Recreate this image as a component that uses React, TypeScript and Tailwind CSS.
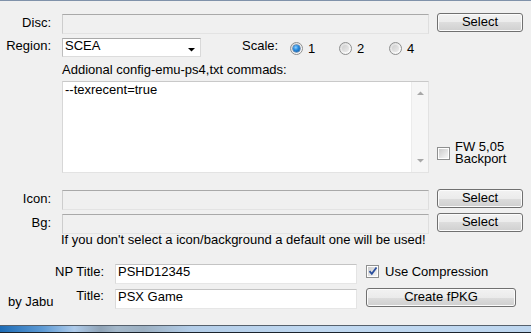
import React from "react";

const font = { fontFamily: '"Liberation Sans", Arial, sans-serif' };

function Btn({ children, className = "" }: { children: React.ReactNode; className?: string }) {
  return (
    <div
      className={
        "flex items-center justify-center rounded-[3px] border border-[#707070] bg-[linear-gradient(to_bottom,#f2f2f2_0%,#ebebeb_50%,#dddddd_50%,#cfcfcf_100%)] shadow-[inset_0_0_0_1px_#fbfbfb] text-[13px] leading-[14px] text-black " +
        className
      }
    >
      <span className="-mt-[1px]">{children}</span>
    </div>
  );
}

function DisabledField({ className = "" }: { className?: string }) {
  return (
    <div
      className={
        "h-[20px] w-[367px] border border-t-[#a9a9a9] border-l-[#cdcdcd] border-r-[#dedede] border-b-[#e3e3e3] bg-[#f0f0f0] " +
        className
      }
    />
  );
}

function WhiteField({ value, className = "" }: { value: string; className?: string }) {
  return (
    <div
      className={
        "h-[20px] w-[242px] border border-t-[#c4c4c4] border-l-[#dadada] border-r-[#e4e4e4] border-b-[#e6e6e6] bg-white pl-[2px] text-[13px] leading-[14px] text-black " +
        className
      }
    >
      {value}
    </div>
  );
}

function Radio({ checked }: { checked?: boolean }) {
  return (
    <div className="relative h-[13px] w-[13px] shrink-0 rounded-full border border-[#8e8f8f] bg-[linear-gradient(135deg,#d6d6d6_0%,#f4f4f4_60%,#ffffff_100%)]">
      {checked ? (
        <div className="absolute left-[2px] top-[2px] h-[7px] w-[7px] rounded-full bg-[radial-gradient(circle_at_40%_35%,#8fd0ff_0%,#2a8de0_40%,#0d4e93_100%)] shadow-[0_0_0_0.5px_#1c4f86]" />
      ) : (
        <div className="absolute left-[2px] top-[2px] h-[7px] w-[7px] rounded-full bg-[linear-gradient(135deg,#cfcfcf_0%,#ececec_100%)]" />
      )}
    </div>
  );
}

function Check({ checked }: { checked?: boolean }) {
  return (
    <div className="relative h-[13px] w-[13px] shrink-0 border border-[#8e8f8f] bg-white">
      <div className="absolute left-[1px] top-[1px] h-[9px] w-[9px] bg-[linear-gradient(135deg,#cbcbcb_0%,#e6e6e6_60%,#f6f6f6_100%)]" />
      {checked ? (
        <svg className="absolute left-[1px] top-[0px]" width="10" height="10" viewBox="0 0 10 10">
          <path d="M1.5 5.2 L3.8 7.8 L8.5 1.5" fill="none" stroke="#2a4f9e" strokeWidth="1.8" />
        </svg>
      ) : null}
    </div>
  );
}

export default function App() {
  return (
    <div className="flex h-[333px] w-[531px] flex-col overflow-hidden bg-[#f0f0f0] text-[13px] text-black" style={font}>
      <div className="h-[1px] shrink-0 bg-[#8092aa]" />

      {/* Disc */}
      <div className="mt-[12px] flex items-start">
        <div className="mt-[3px] w-[51px] text-right leading-[14px]">Disc:</div>
        <DisabledField className="ml-[11px] mt-[1px]" />
        <Btn className="ml-[8px] h-[19px] w-[86px]">Select</Btn>
      </div>

      {/* Region / Scale */}
      <div className="mt-[4px] flex items-start">
        <div className="mt-[1px] w-[51px] text-right leading-[14px]">Region:</div>
        <div className="ml-[11px] flex h-[19px] w-[139px] items-start border border-t-[#a9a9a9] border-l-[#bdbdbd] border-r-[#d9d9d9] border-b-[#dcdcdc] bg-white">
          <span className="flex-1 pl-[2px] leading-[14px]">SCEA</span>
          <svg className="mr-[5px] mt-[9px]" width="7" height="4" viewBox="0 0 7 4">
            <path d="M0 0 H7 L3.5 3.5 Z" fill="#000" />
          </svg>
        </div>
        <div className="ml-[41px] mt-[1px] w-[48px] leading-[14px]">Scale:</div>
        <div className="mt-[4px] flex w-[49px] items-center">
          <Radio checked />
          <span className="ml-[5px] leading-[13px]">1</span>
        </div>
        <div className="mt-[4px] flex w-[50px] items-center">
          <Radio />
          <span className="ml-[5px] leading-[13px]">2</span>
        </div>
        <div className="mt-[4px] flex items-center">
          <Radio />
          <span className="ml-[5px] leading-[13px]">4</span>
        </div>
      </div>

      {/* Config label */}
      <div className="mt-[6px] pl-[62px] leading-[14px]">Addional config-emu-ps4,txt commads:</div>

      {/* Textarea + FW */}
      <div className="mt-[4px] flex items-start">
        <div className="ml-[62px] flex h-[92px] w-[367px] border border-t-[#c9c9c9] border-l-[#d7d7d7] border-r-[#e2e2e2] border-b-[#e3e3e3] bg-white">
          <div className="flex-1 pl-[2px] pt-[1px] leading-[14px]">--texrecent=true</div>
          <div className="flex w-[17px] flex-col items-center justify-between border-l border-[#ececec] bg-[#f6f6f6] py-[9px]">
            <svg width="7" height="4" viewBox="0 0 7 4">
              <path d="M0 4 H7 L3.5 0.5 Z" fill="#a8a8a8" />
            </svg>
            <svg width="7" height="4" viewBox="0 0 7 4">
              <path d="M0 0 H7 L3.5 3.5 Z" fill="#a8a8a8" />
            </svg>
          </div>
        </div>
        <div className="ml-[8px] mt-[60px] flex items-start">
          <div className="mt-[6px]">
            <Check />
          </div>
          <div className="ml-[5px] leading-[12px]">
            <div>FW 5,05</div>
            <div>Backport</div>
          </div>
        </div>
      </div>

      {/* Icon */}
      <div className="mt-[16px] flex items-start">
        <div className="mt-[3px] w-[51px] text-right leading-[14px]">Icon:</div>
        <DisabledField className="ml-[11px] mt-[1px]" />
        <Btn className="ml-[8px] h-[19px] w-[86px]">Select</Btn>
      </div>

      {/* Bg */}
      <div className="mt-[3px] flex items-start">
        <div className="mt-[3px] w-[51px] text-right leading-[14px]">Bg:</div>
        <DisabledField className="ml-[11px] mt-[1px]" />
        <Btn className="ml-[8px] h-[19px] w-[86px]">Select</Btn>
      </div>

      <div className="pl-[61px] leading-[12px]">
        If you don&apos;t select a icon/background a default one will be used!
      </div>

      {/* NP Title */}
      <div className="mt-[18px] flex items-start">
        <div className="mt-[1px] w-[104px] text-right leading-[14px]">NP Title:</div>
        <WhiteField value="PSHD12345" className="ml-[11px]" />
        <div className="ml-[9px] mt-[1px]">
          <Check checked />
        </div>
        <div className="ml-[6px] mt-[1px] leading-[14px]">Use Compression</div>
      </div>

      {/* Title */}
      <div className="mt-[4px] flex items-start">
        <div className="flex w-[104px] items-start justify-between">
          <span className="ml-[8px] mt-[7px] leading-[14px]">by Jabu</span>
          <span className="mt-[1px] leading-[14px]">Title:</span>
        </div>
        <WhiteField value="PSX Game" className="ml-[11px] mt-[1px]" />
        <Btn className="ml-[9px] h-[19px] w-[150px]">Create fPKG</Btn>
      </div>

      <div className="flex-1" />

      {/* taskbar strip */}
      <div className="h-[1px] shrink-0 bg-[#56616d]" />
      <div className="h-[6px] shrink-0 bg-[linear-gradient(to_right,#1d6cb6_0%,#5d9ad4_8%,#aecbea_14%,#8fa3b6_19%,#a4b8ca_22%,#9cb0c2_27%,#b3cde8_36%,#c0d8f0_60%,#bdd6ef_100%)]" />
      <div className="h-[1px] shrink-0 bg-[#1b232c]" />
    </div>
  );
}
